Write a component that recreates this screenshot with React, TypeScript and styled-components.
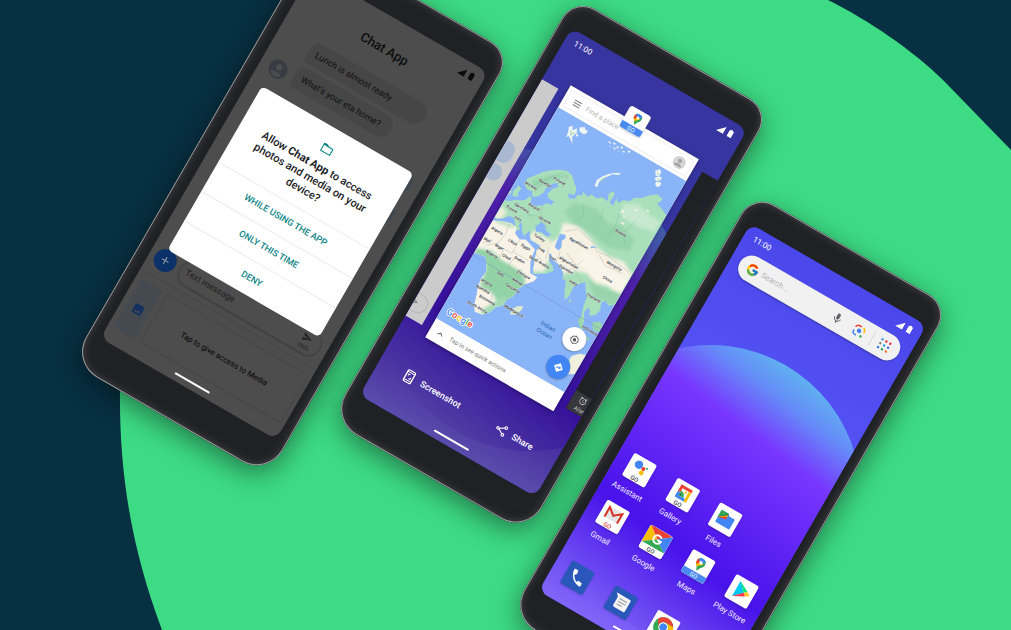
import React from "react";
import styled, { createGlobalStyle, css } from "styled-components";
import { FcGoogle } from "react-icons/fc";
import { MdMic, MdImage, MdAccountCircle, MdPhone, MdAlarm, MdAdd, MdSend } from "react-icons/md";

const GlobalStyle = createGlobalStyle`
  *, *::before, *::after { box-sizing: border-box; }
  body {
    margin: 0;
    background: #073042;
    font-family: Roboto, "Liberation Sans", sans-serif;
  }
  button, input { font-family: inherit; border: 0; margin: 0; padding: 0; background: none; }
  svg { display: block; flex: none; }
`;

/* ---------- stage ---------- */

const Stage = styled.main`
  position: relative;
  display: grid;
  place-items: center;
  min-height: 100vh;
  overflow: hidden;
  background: #073042;
`;

const Backdrop = styled.svg`
  position: absolute;
  inset: 0;
  width: 100%;
  height: 100%;
`;

const PhoneRow = styled.div`
  display: flex;
  align-items: flex-end;
  gap: 26px;
  height: 568px;
  transform: translate(25px, -15px) rotate(30deg);
`;

const Phone = styled.section<{ $raised?: boolean }>`
  position: relative;
  flex: none;
  width: 227px;
  height: 488px;
  padding: 28px 11px 36px 13px;
  align-self: ${(p) => (p.$raised ? "flex-start" : "flex-end")};
  border-radius: 24px 24px 30px 30px;
  background: #202124;
  box-shadow:
    inset 0 0 0 1px #9c9f9e,
    inset 0 0 8px 1px #45454c,
    3px 7px 28px rgba(0, 0, 0, 0.45);
`;

const Screen = styled.div<{ $bg: string }>`
  position: relative;
  display: flex;
  flex-direction: column;
  height: 100%;
  overflow: hidden;
  border-radius: 10px;
  background: ${(p) => p.$bg};
`;

const StatusBar = styled.header<{ $ink: string }>`
  position: relative;
  display: flex;
  align-items: center;
  flex: none;
  gap: 4px;
  height: 23px;
  padding: 0 10px;
  color: ${(p) => p.$ink};
  font-size: 8px;
  line-height: 10px;
  svg:first-of-type { margin-left: auto; }
`;

const NavPill = styled.div`
  position: absolute;
  left: 50%;
  bottom: 6px;
  width: 40px;
  height: 2px;
  margin-left: -20px;
  border-radius: 1px;
  background: #fff;
`;

function Status({ ink, time }: { ink: string; time?: string }) {
  return (
    <StatusBar $ink={ink}>
      {time && <time>{time}</time>}
      <svg width="8" height="8" viewBox="0 0 8 8" aria-hidden="true">
        <path d="M8 0V8H0Z" fill="currentColor" />
      </svg>
      <svg width="5" height="8" viewBox="0 0 5 8" aria-hidden="true">
        <path d="M1.4 0h2.2v.9H5V7.4a.6.6 0 0 1-.6.6H.6a.6.6 0 0 1-.6-.6V.9h1.4z" fill="currentColor" />
      </svg>
    </StatusBar>
  );
}

/* ---------- chat phone ---------- */

const ChatTitle = styled.h1`
  margin: 0;
  color: #0d0d0d;
  font-size: 13px;
  font-weight: 500;
  line-height: 18px;
  text-align: center;
`;

const Conversation = styled.div`
  display: flex;
  align-items: flex-end;
  gap: 6px;
  margin-top: 18px;
  padding-left: 8px;
  color: #383c42;
`;

const Bubbles = styled.div`
  display: flex;
  flex-direction: column;
  align-items: flex-start;
  gap: 4px;
  padding-bottom: 3px;
`;

const Bubble = styled.p<{ $wide?: boolean }>`
  width: ${(p) => (p.$wide ? "134px" : "auto")};
  margin: 0;
  padding: 0 13px 0 8px;
  border-radius: 8px 12px 12px 3px;
  background: #464646;
  color: #0f0f0f;
  font-size: 9px;
  line-height: 24px;
`;

const Sent = styled.div`
  width: 90px;
  height: 25px;
  margin: 11px 10px 0 auto;
  border-radius: 12px;
  background: #3f4850;
`;

const Composer = styled.div`
  display: flex;
  align-items: center;
  gap: 5px;
  margin-top: auto;
  padding: 0 7px 6px 6px;
`;

const AddButton = styled.button`
  display: grid;
  place-items: center;
  width: 23px;
  height: 23px;
  border-radius: 50%;
  background: #0c3068;
  color: #8c97a5;
`;

const MessageBox = styled.label`
  display: flex;
  align-items: center;
  flex: 1;
  height: 26px;
  padding: 0 9px 0 6px;
  border: 1px solid #414141;
  border-radius: 13px;
  box-shadow: 0 1px 1px #404040;
`;

const TextInput = styled.input<{ $size: number; $ink: string; $indent?: number }>`
  flex: 1;
  min-width: 0;
  height: 14px;
  padding-left: ${(p) => p.$indent ?? 0}px;
  color: ${(p) => p.$ink};
  font-size: ${(p) => p.$size}px;
  line-height: 14px;
  outline: 0;
  &::placeholder { color: ${(p) => p.$ink}; opacity: 1; }
`;

const SmsButton = styled.button`
  display: flex;
  flex-direction: column;
  align-items: center;
  color: #262626;
  font-size: 6px;
  line-height: 8px;
`;

const MediaPanel = styled.div`
  display: flex;
  gap: 6px;
  padding: 8px 4px 16px 6px;
  border-top: 1px solid #464646;
`;

const MediaTab = styled.button`
  display: grid;
  place-items: center;
  width: 24px;
  height: 56px;
  background: #444a50;
  color: #11305f;
`;

const MediaNotice = styled.p`
  display: grid;
  place-items: center;
  flex: 1;
  margin: 0;
  border: 1px solid #464646;
  border-radius: 2px;
  color: #050505;
  font-size: 8px;
`;

const Overlay = styled.div`
  position: absolute;
  inset: 0;
  display: grid;
  align-items: center;
  padding: 14px 14px 0;
`;

const Dialog = styled.div`
  border-radius: 5px;
  background: #fff;
`;

const DialogHead = styled.div`
  display: flex;
  flex-direction: column;
  align-items: center;
  gap: 7px;
  padding: 16px 12px 10px;
`;

const DialogTitle = styled.h2`
  margin: 0;
  color: #202124;
  font-size: 11px;
  font-weight: 500;
  line-height: 14px;
  text-align: center;
  b { font-weight: 700; }
`;

const DialogButton = styled.button`
  display: block;
  width: 100%;
  height: 34px;
  border-top: 1px solid #ececec;
  color: #0b8484;
  font-size: 9px;
  font-weight: 500;
  line-height: 12px;
`;

function ChatPhone() {
  return (
    <Phone aria-label="Permission request">
      <Screen $bg="#4d4d4d">
        <Status ink="#0a0a0a" />
        <ChatTitle>Chat App</ChatTitle>
        <Conversation>
          <MdAccountCircle size={23} />
          <Bubbles>
            <Bubble $wide>Lunch is almost ready</Bubble>
            <Bubble>What’s your eta home?</Bubble>
          </Bubbles>
        </Conversation>
        <Sent />
        <Sent />
        <Composer>
          <AddButton aria-label="Add attachment"><MdAdd size={13} /></AddButton>
          <MessageBox>
            <TextInput $size={9} $ink="#1f1f1f" placeholder="Text message" aria-label="Text message" />
            <SmsButton>
              <MdSend size={11} />
              SMS
            </SmsButton>
          </MessageBox>
        </Composer>
        <MediaPanel>
          <MediaTab aria-label="Media"><MdImage size={13} /></MediaTab>
          <MediaNotice>Tap to give access to Media</MediaNotice>
        </MediaPanel>
        <Overlay>
          <Dialog role="dialog" aria-labelledby="permission-title">
            <DialogHead>
              <svg width="12" height="12" viewBox="0 0 12 12" fill="none" stroke="#0b8484" aria-hidden="true">
                <path d="M.8 2.2h3.6l1.2 1.3h5.6v6.7H.8z" strokeWidth="1.1" strokeLinejoin="round" />
                <path d="M.8 2h3.8l1.3 1.6H.8z" fill="#0b8484" strokeWidth=".3" />
              </svg>
              <DialogTitle id="permission-title">
                Allow <b>Chat App</b> to access<br />photos and media on your<br />device?
              </DialogTitle>
            </DialogHead>
            <DialogButton>WHILE USING THE APP</DialogButton>
            <DialogButton>ONLY THIS TIME</DialogButton>
            <DialogButton>DENY</DialogButton>
          </Dialog>
        </Overlay>
        <NavPill />
      </Screen>
    </Phone>
  );
}

/* ---------- wallpaper ---------- */

const WallpaperSvg = styled.svg`
  position: absolute;
  inset: 0;
  width: 100%;
  height: 100%;
`;

function Wallpaper({ id, sky, disc }: { id: string; sky: string[]; disc: string[] }) {
  const stops = [0, 0.1, 0.25, 0.7, 1];
  return (
    <WallpaperSvg viewBox="0 0 203 424" preserveAspectRatio="xMidYMid slice" aria-hidden="true">
      <defs>
        <linearGradient id={`${id}-sky`} x1="0" y1="0" x2="0" y2="1">
          {sky.map((c, i) => <stop key={i} offset={[0, 0.4, 0.8, 1][i]} stopColor={c} />)}
        </linearGradient>
        <linearGradient id={`${id}-disc`} gradientUnits="userSpaceOnUse" x1="124" y1="107" x2="84" y2="408">
          {disc.map((c, i) => <stop key={i} offset={stops[i]} stopColor={c} />)}
        </linearGradient>
      </defs>
      <rect width="203" height="424" fill={`url(#${id}-sky)`} />
      <circle cx="101" cy="256" r="151" fill={`url(#${id}-disc)`} />
    </WallpaperSvg>
  );
}

/* ---------- shared drawings ---------- */

function MapsPin({ size }: { size: number }) {
  return (
    <svg width={size} height={size} viewBox="0 0 24 24" aria-hidden="true">
      <defs>
        <clipPath id={`pin-${size}`}>
          <path d="M12 1a7.6 7.6 0 0 0-7.6 7.6c0 2.2.8 3.8 2.2 5.5 2 2.4 3.4 3.9 4.2 7.2.3 1.1.6 1.7 1.2 1.7s.9-.6 1.2-1.7c.8-3.3 2.2-4.8 4.2-7.2 1.4-1.7 2.2-3.3 2.2-5.5A7.6 7.6 0 0 0 12 1z" />
        </clipPath>
      </defs>
      <g clipPath={`url(#pin-${size})`}>
        <rect width="24" height="24" fill="#34a853" />
        <path d="M12 9L7 16 0 10V3L9 0z" fill="#fbbc04" />
        <path d="M0 14l8 4 9-9-5-3z" fill="#fbbc04" />
        <path d="M0 3l6 1 5 4-5 6-6-4z" fill="#ea4335" />
        <path d="M8 0h8l4 4-8 6-7-6z" fill="#4285f4" />
      </g>
      <circle cx="12" cy="8.6" r="2.7" fill="#fff" />
    </svg>
  );
}

/* ---------- recents phone ---------- */

const Recents = styled.div`
  position: relative;
  display: flex;
  align-items: center;
  justify-content: space-between;
  height: 291px;
  margin-top: 27px;
`;

const PreviousCard = styled.div`
  display: flex;
  flex-direction: column;
  width: 19px;
  height: 273px;
  overflow: hidden;
  background: #cbcbcb;
`;

const PaleBubble = styled.div<{ $h: number; $top: number }>`
  flex: none;
  width: 26px;
  height: ${(p) => p.$h}px;
  margin: ${(p) => p.$top}px 0 0 -13px;
  border-radius: 9px;
  background: #a9b8cf;
`;

const PaleSend = styled.div`
  flex: none;
  display: grid;
  place-items: center end;
  width: 30px;
  height: 20px;
  margin: auto 0 7px -15px;
  padding-right: 9px;
  border: 1px solid #b5b5b5;
  border-radius: 10px;
  color: #7d7d7d;
`;

const NextCard = styled.div`
  display: flex;
  align-items: flex-end;
  width: 18px;
  height: 273px;
  overflow: hidden;
  background: #202124;
`;

const AlarmTab = styled.div`
  display: flex;
  flex-direction: column;
  gap: 1px;
  flex: none;
  width: 30px;
  height: 21px;
  padding: 2px 7px;
  background: #37383b;
  color: #c3c4c6;
  font-size: 6px;
  line-height: 7px;
`;

const MapCard = styled.article`
  position: relative;
  display: flex;
  flex-direction: column;
  width: 148px;
  height: 291px;
  background: #fff;
  box-shadow: 0 1px 4px rgba(0, 0, 0, 0.35);
`;

const MapSearch = styled.label`
  display: flex;
  align-items: center;
  flex: none;
  height: 19px;
  margin: 3px;
  padding: 0 5px 0 7px;
  border: 1px solid #f0f0f0;
  border-radius: 2px;
  color: #c4c4c4;
`;

const MapsBadge = styled.div`
  position: absolute;
  top: -13px;
  left: 50%;
  width: 24px;
  height: 24px;
  margin-left: -12px;
  border-radius: 3px;
  overflow: hidden;
  background: #fff;
  box-shadow: 0 1px 2px rgba(0, 0, 0, 0.25);
`;

const GoStrip = styled.span<{ $tone: "plain" | "blue" | "red" }>`
  position: absolute;
  inset: auto 0 0;
  color: #444;
  font-size: 6px;
  font-weight: 500;
  line-height: 7px;
  text-align: center;
  ${(p) => p.$tone === "blue" && css`background: #4a8af0; color: #d7e6ff;`}
  ${(p) => p.$tone === "red" && css`color: #e0453a;`}
`;

const BadgePin = styled.div`
  display: grid;
  justify-items: center;
  padding-top: 3px;
`;

const MapArea = styled.div`
  position: relative;
  flex: 1;
  min-height: 0;
  > svg { width: 100%; height: 100%; }
`;

const MapButtons = styled.div`
  position: absolute;
  right: 6px;
  bottom: 7px;
  display: flex;
  flex-direction: column;
  gap: 8px;
`;

const MapButton = styled.button<{ $blue?: boolean }>`
  display: grid;
  place-items: center;
  width: 24px;
  height: 24px;
  border-radius: 50%;
  background: ${(p) => (p.$blue ? "#4285f4" : "#fff")};
  box-shadow: 0 1px 2px rgba(0, 0, 0, 0.3);
`;

const QuickBar = styled.button`
  display: flex;
  align-items: center;
  flex: none;
  gap: 7px;
  height: 22px;
  padding-left: 8px;
  color: #777;
  font-size: 6px;
  line-height: 8px;
`;

const Actions = styled.div`
  position: relative;
  display: flex;
  justify-content: space-between;
  margin-top: 34px;
  padding: 0 27px 0 28px;
`;

const Action = styled.button`
  display: flex;
  align-items: center;
  gap: 7px;
  height: 16px;
  color: #fff;
  font-size: 9px;
  font-weight: 500;
`;

const LABELS: [string, number, number][] = [
  ["Algeria", 9, 138], ["Mali", 5, 151], ["Libya", 28, 140], ["Niger", 19, 151], ["Egypt", 42, 138],
  ["Nigeria", 16, 161], ["Chad", 30, 156], ["Sudan", 43, 152], ["Saudi Arabia", 61, 144], ["Iran", 71, 134],
  ["Iraq", 57, 132], ["Turkey", 49, 123], ["Afghanistan", 87, 130], ["Pakistan", 88, 137], ["India", 101, 145],
  ["Kazakhstan", 86, 108], ["DRC", 34, 174], ["Ethiopia", 54, 163], ["Kenya", 52, 172], ["Tanzania", 51, 180],
  ["Angola", 26, 188], ["Namibia", 26, 196], ["Botswana", 35, 203], ["South Africa", 30, 214],
  ["Madagascar", 64, 199], ["Thailand", 126, 148], ["Indonesia", 139, 178], ["Mongolia", 128, 110],
  ["China", 129, 125], ["Russia", 117, 78], ["Ukraine", 45, 105], ["Poland", 29, 99], ["Germany", 19, 106],
  ["France", 11, 112], ["Italy", 21, 117], ["Norway", 16, 82], ["Sweden", 27, 73], ["Finland", 38, 64],
];

const EURASIA =
  "M0 108L6 105 9 102 14 100 18 97 20 91 23 93 24 98 30 97 36 93 38 89 43 88 44 84 38 84 34 81 36 74 40 69 37 66 33 70 30 76 30 82 27 88 22 91 20 86 14 87 9 83 9 77 14 71 19 64 25 59 32 54 39 51 46 52 50 56 57 62 58 68 52 70 55 74 60 71 61 66 65 65 64 61 70 63 73 59 79 60 83 56 90 57 87 50 90 45 93 48 92 57 97 58 96 50 100 53 103 48 109 46 111 41 118 37 124 30 130 26 137 28 134 34 142 37 148 40V143L143 147 138 144 135 148 138 155 136 162 131 165 129 160 126 159 125 165 129 171 131 180 127 175 123 165 121 158 120 150 116 146 111 138 107 142 103 148 104 158 102 164 98 157 93 146 90 147 87 141 80 136 72 135 68 131 65 131 69 138 74 140 78 144 73 150 62 157 59 152 55 141 53 135 54 129 48 129 43 129 39 125 38 121 36 124 35 129 31 126 28 121 25 118 25 122 28 125 25 129 22 124 17 118 12 119 8 124 3 127 0 128Z";
const AFRICA =
  "M0 131L8 127 18 124 24 125 26 131 33 134 38 131 45 133 51 135 53 147 56 153 59 158 67 158 66 163 60 170 56 178 56 186 52 192 51 200 46 204 44 211 38 218 30 219 26 213 23 203 20 195 19 186 20 178 15 170 12 166 0 168Z";

function WorldMap() {
  return (
    <svg viewBox="0 0 148 244" preserveAspectRatio="xMidYMid slice" role="img" aria-label="World map">
      <defs>
        <clipPath id="eurasia"><path d={EURASIA} /></clipPath>
        <clipPath id="africa"><path d={AFRICA} /></clipPath>
        <filter id="soft" x="-20%" y="-20%" width="140%" height="140%"><feGaussianBlur stdDeviation="1.6" /></filter>
      </defs>
      <rect width="148" height="244" fill="#8ab4f8" />
      <g fill="#eef5f3">
        <path d="M19 12L22 9 24 13 27 9 29 13 27 19 31 25 27 22 24 20 22 22 21 16zM29 7l4-3 2 2 3 0-1 4-3 1-4-1zM29 13l3 2-2 2z" />
        <path d="M60 5l3-1 1 2zM65 3l4 0-2 2zM69 6l3-2 1 2zM74 2l3 1-2 2zM77 6l3-1 0 2zM67 8l3-1 1 2zM82 3l3-1-1 3zM73 8l2 0 0 1zM63 8l2 0 0 1z" />
        <path d="M71 50l-1-6 3-6 4-5 6-5 5-2-2 3-5 2-4 5-3 5-1 5 1 4z" />
        <path d="M116 7l3-4 3 2 0 4-3 2zM121 10l4-1 0 4-3 2-3-1zM122 16l5-2 1 3-2 3-3-1z" />
      </g>
      <path d="M23 14l2 4 2-4M119 7l1 2M123 12l1 3M73 44l3-7" fill="none" stroke="#a8dab5" strokeWidth="1.2" />
      <path d={EURASIA} fill="#a9dfbb" />
      <g clipPath="url(#eurasia)">
        <g filter="url(#soft)">
          <path d="M62 98L76 93 92 97 104 102 118 104 134 101 148 108V133L132 130 120 134 108 130 98 133 88 142 68 134 70 150 54 158 50 128 60 124 66 112Z" fill="#f6f1e2" />
          <path d="M40 119l20 0 4 8-24 4zM0 114l8 3-2 10-8 2z" fill="#efeeda" />
          <path d="M62 74l22-5 18 7 12-5 18 6 2 12-22 8-20-4-20 1-14-6z" fill="#97d4ac" />
          <path d="M14 76l11-10 12-12 7 0-13 15-12 15z" fill="#9ad6b0" />
          <path d="M104 52l14-8 16 4 12 0v12l-16 4-18 0z" fill="#c6e8ce" />
          <path d="M96 108l10 4 16-1 14 5 12-2v14l-24 4-20-6-14 0z" fill="#faf5ea" />
          <path d="M112 134l16 0 20-4v14l-22 2z" fill="#98d4ac" />
          <path d="M94 143l8-2 3 8-1 8-5-2z" fill="#a9dcb8" />
        </g>
        <g fill="none" stroke="#7fc79a" strokeWidth=".7" opacity=".7">
          <path d="M70 72l6 8-3 9M90 66l3 10-4 12M106 62l3 12-2 14M124 60l-4 16 6 10M20 104l9 4 7-3 9 4M12 88l10-14 12-16" />
        </g>
        <g fill="#e6efdd">
          <path d="M106 57l3-1 1 3-3 2zM110 61l3-1 0 2-2 1zM117 50l4-1 0 2-3 1zM128 44l4 1-3 2zM112 68l3-1 1 2-3 1zM126 57l3 0-1 2zM119 56l3 1-2 1z" />
        </g>
      </g>
      <path d={AFRICA} fill="#f8f3e6" />
      <g clipPath="url(#africa)">
        <g filter="url(#soft)">
          <path d="M0 163l14-5 14 3 14 0 12 1 6 8-4 22-10 8-10-6-14 0-4-20L0 170z" fill="#92d3a6" />
          <path d="M46 194l12-4-8 20-10 8-6-2z" fill="#a5dab4" />
          <path d="M2 128l20-4 0 3-18 4z" fill="#b4dfba" />
        </g>
      </g>
      <path d="M43 108l5 1 3 4 7 1-3 4-6-1-6 2-3-4zM65 109l5-2 2 3-2 4 3 6-1 4-5-1-1-6zM78 107l3 0 0 3-3 0zM98 104l6-2-5 4z" fill="#8ab4f8" />
      <path d="M62 204l-1-6 3-5 5-3 1 4-3 7z" fill="#dcebcf" />
      <path d="M106 160l2 1 0 3-2-1z" fill="#a9dcb8" />
      <path d="M3 95l2-7 4 1-1 5 2 4-5 2zM0 96l2 0 0 4-2 0z" fill="#a9dfbb" />
      <path d="M124 170l5 5 4 8-3-1-6-7zM137 170l6-5 5 2v7l-6 2zM133 184l10 1v2l-9-1zM140 134l3 3-2 1z" fill="#98d4ac" />
      <path d="M148 201l-6 2-6 6 0 9 2 8 5 0 5-3z" fill="#f1efdd" />
      <path d="M136 211l-1 8 3 7 3-1-3-8z" fill="#a5dab4" />
      <g fill="none" stroke="#a9a9a0" strokeWidth=".35">
        <path d="M16 126l2 10-2 12-10 8M33 134l0 16-10 0M33 148l18 0M10 148l-8 8M24 152l0 12M38 150l-2 12 8 4M50 158l-4 8 8 6M38 182l-12 0M22 194l14 0 4 10M62 126l3 12M54 138l10 4M74 124l2 12M80 122l14 6-4 12M98 120l-4 12 14 8M68 104l10-8 20 4 8 6M106 106l12-2 26 4M110 108l10 6 18-2" />
        <path d="M24 98l2 10 10 2M36 94l4 12 12 4M14 102l2 10M28 62l-6 24M42 54l2 14" />
      </g>
      <path d="M0 171H148" stroke="#6f8fb8" strokeWidth=".6" strokeDasharray="2 1" />
      <g fill="#2b2d30" fontFamily="Roboto, sans-serif" fontSize="4" fontWeight="500" textAnchor="middle" stroke="#fff" strokeWidth=".3" paintOrder="stroke">
        {LABELS.map(([name, x, y]) => <text key={name} x={x} y={y + 1}>{name}</text>)}
      </g>
      <g fill="#2566b5" fontFamily="Roboto, sans-serif" fontSize="6" textAnchor="middle">
        <text x="101" y="197">Indian</text>
        <text x="101" y="205">Ocean</text>
      </g>
      <text x="6" y="235" fontFamily="Roboto, sans-serif" fontSize="9" fontWeight="500" stroke="#fff" strokeWidth="1.6" paintOrder="stroke">
        <tspan fill="#4285f4">G</tspan><tspan fill="#ea4335">o</tspan><tspan fill="#fbbc04">o</tspan>
        <tspan fill="#4285f4">g</tspan><tspan fill="#34a853">l</tspan><tspan fill="#ea4335">e</tspan>
      </text>
    </svg>
  );
}

function RecentsPhone() {
  return (
    <Phone $raised aria-label="Recent apps">
      <Screen $bg="#36349c">
        <Wallpaper
          id="recents"
          sky={["#37359f", "#3535a0", "#3c1e9a", "#5a4cab"]}
          disc={["#41699f", "#4252a8", "#4d20a8", "#35109a", "#4f3ea4"]}
        />
        <Status ink="#fff" time="11:00" />
        <Recents>
          <PreviousCard>
            <PaleBubble $h={23} $top={70} />
            <PaleBubble $h={17} $top={3} />
            <PaleSend><MdSend size={6} /></PaleSend>
          </PreviousCard>
          <MapCard>
            <MapSearch>
              <svg width="8" height="8" viewBox="0 0 8 8" stroke="#666" strokeWidth=".9" aria-hidden="true">
                <path d="M0 1.5H8M0 4H8M0 6.5H8" />
              </svg>
              <TextInput $size={7} $ink="#b5b5b5" $indent={6} placeholder="Find a place" aria-label="Find a place" />
              <svg width="13" height="13" viewBox="0 0 13 13" aria-hidden="true">
                <circle cx="6.5" cy="6.5" r="6.5" fill="#d4d4d4" />
                <circle cx="6.5" cy="4.8" r="2" fill="#a3a3a3" />
                <path d="M2.6 10.6c0-2 2.4-2.8 3.9-2.8s3.9.8 3.9 2.8z" fill="#a3a3a3" />
              </svg>
            </MapSearch>
            <MapArea>
              <WorldMap />
              <MapButtons>
                <MapButton aria-label="My location">
                  <svg width="11" height="11" viewBox="0 0 11 11" fill="none" stroke="#666" aria-hidden="true">
                    <circle cx="5.5" cy="5.5" r="3.6" strokeWidth=".9" />
                    <circle cx="5.5" cy="5.5" r="1.7" fill="#555" stroke="none" />
                    <path d="M5.5 .8v1.4M5.5 8.8v1.4M.8 5.5h1.4M8.8 5.5h1.4" strokeWidth=".9" />
                  </svg>
                </MapButton>
                <MapButton $blue aria-label="Directions">
                  <svg width="11" height="11" viewBox="0 0 11 11" aria-hidden="true">
                    <path d="M5.5 1L10 5.5 5.5 10 1 5.5z" fill="#fff" stroke="#fff" strokeLinejoin="round" strokeWidth=".6" />
                    <path d="M4 7V5.2h3M6 3.8l1.4 1.4L6 6.6" fill="none" stroke="#4285f4" strokeWidth=".9" />
                  </svg>
                </MapButton>
              </MapButtons>
            </MapArea>
            <QuickBar>
              <svg width="7" height="5" viewBox="0 0 7 5" fill="none" stroke="#666" aria-hidden="true">
                <path d="M1 4l2.5-2.5L6 4" />
              </svg>
              Tap to see quick actions
            </QuickBar>
            <MapsBadge>
              <BadgePin><MapsPin size={13} /></BadgePin>
              <GoStrip $tone="blue">GO</GoStrip>
            </MapsBadge>
          </MapCard>
          <NextCard>
            <AlarmTab>
              <MdAlarm size={9} />
              Alarm
            </AlarmTab>
          </NextCard>
        </Recents>
        <Actions>
          <Action>
            <svg width="12" height="14" viewBox="0 0 12 14" fill="none" stroke="#fff" aria-hidden="true">
              <rect x="2" y=".8" width="8" height="12.4" rx="1.2" strokeWidth="1.3" />
              <path d="M2 2.8h8M2 11.2h8" strokeWidth="1" />
              <path d="M4.2 6.6V4.8H6M7.8 7.4v1.8H6" strokeWidth="1" />
            </svg>
            Screenshot
          </Action>
          <Action>
            <svg width="12" height="12" viewBox="0 0 12 12" fill="none" stroke="#fff" strokeWidth="1.1" aria-hidden="true">
              <path d="M3 6l6-3.6M3 6l6 3.6" />
              <circle cx="2.2" cy="6" r="1.2" fill="#35129a" />
              <circle cx="9.6" cy="2.1" r="1.3" fill="#35129a" />
              <circle cx="9.6" cy="9.9" r="1.3" fill="#35129a" />
            </svg>
            Share
          </Action>
        </Actions>
        <NavPill />
      </Screen>
    </Phone>
  );
}

/* ---------- home phone ---------- */

const SearchBar = styled.label`
  position: relative;
  display: flex;
  align-items: center;
  flex: none;
  height: 27px;
  margin: 2px 10px 0;
  padding: 0 10px 0 8px;
  border-radius: 14px;
  background: #f1f1f1;
  box-shadow: 0 1px 2px rgba(0, 0, 0, 0.3);
  color: #5f6368;
`;

const SearchTools = styled.span`
  display: flex;
  align-items: center;
  gap: 12px;
`;

const Rule = styled.span`
  width: 1px;
  height: 15px;
  margin: 0 -5px 0 -4px;
  background: #d9d9d9;
`;

const AppGrid = styled.div<{ $push?: boolean }>`
  position: relative;
  display: grid;
  grid-template-columns: repeat(4, 1fr);
  row-gap: 11px;
  margin: ${(p) => (p.$push ? "auto 2px 0" : "27px 2px 18px")};
`;

const AppLink = styled.a<{ $first?: boolean }>`
  display: flex;
  flex-direction: column;
  align-items: center;
  gap: 7px;
  grid-column: ${(p) => (p.$first ? 1 : "auto")};
  color: #f1edff;
  font-size: 8px;
  line-height: 10px;
  text-decoration: none;
  white-space: nowrap;
`;

const Tile = styled.span<{ $bg?: string }>`
  position: relative;
  display: block;
  width: 26px;
  height: 26px;
  overflow: hidden;
  border-radius: 2px;
  background: ${(p) => p.$bg ?? "#fff"};
  color: #fff;
  box-shadow: 0 1px 2px rgba(0, 0, 0, 0.2);
`;

const Centered = styled.span<{ $top?: number }>`
  display: grid;
  justify-items: center;
  padding-top: ${(p) => p.$top ?? 0}px;
`;

const Art = ({ children }: { children: React.ReactNode }) => (
  <svg width="26" height="26" viewBox="0 0 26 26" aria-hidden="true">{children}</svg>
);

const AssistantIcon = () => (
  <Tile>
    <Art>
      <circle cx="9.8" cy="8.4" r="4.2" fill="#4285f4" />
      <circle cx="15.8" cy="10" r="2" fill="#ea4335" />
      <circle cx="15.8" cy="14.4" r="2.4" fill="#fbbc04" />
      <circle cx="18.8" cy="8" r="1" fill="#34a853" />
    </Art>
    <GoStrip $tone="plain">GO</GoStrip>
  </Tile>
);

const GalleryIcon = () => (
  <Tile>
    <Art>
      <path d="M6.5 4h13v3H9.4v4.4H6.5z" fill="#ea4335" />
      <path d="M16.6 7h2.9v11h-2.9z" fill="#fbbc04" />
      <path d="M6.5 11.4h2.9V15h7.2v3H6.5z" fill="#4285f4" />
      <path d="M9.4 9.6c3 .4 5 2.4 5.6 5.4h-2.8c0-1.6-1-2.8-2.8-3.2z" fill="#34a853" />
      <path d="M9.4 11.8c1.8.4 2.8 1.6 2.8 3.2H9.4z" fill="#188038" />
      <circle cx="14.2" cy="9.2" r="1.2" fill="#fbbc04" />
    </Art>
    <GoStrip $tone="plain">GO</GoStrip>
  </Tile>
);

const FilesIcon = () => (
  <Tile>
    <Art>
      <path d="M5 6h8l1.6 2H20.4a1 1 0 0 1 1 1V18.6a1 1 0 0 1-1 1H6a1 1 0 0 1-1-1z" fill="#4285f4" />
      <path d="M5 6h8L5 13.6z" fill="#34a853" />
      <path d="M5 13.6L13 6l.6 2.4L5 14.4z" fill="#188038" />
      <path d="M5 13.8L13.4 7.6V10z" fill="#fbbc04" />
      <path d="M5 14L13.4 9.4v3z" fill="#ea4335" />
    </Art>
  </Tile>
);

const GmailIcon = () => (
  <Tile>
    <Art>
      <rect x="5" y="4.6" width="16" height="11.8" fill="#e3e3e3" />
      <path d="M5 4.6l8 7 8-7v1l-8 8-8-8z" fill="#c9c9c9" />
      <path d="M5.8 16.4V5.6l7.2 5.8 7.2-5.8v10.8" fill="none" stroke="#d93025" strokeWidth="2" />
    </Art>
    <GoStrip $tone="red">GO</GoStrip>
  </Tile>
);

const GoogleIcon = () => (
  <Tile>
    <Art>
      <path d="M0 0h26L13 10z" fill="#ea4335" />
      <path d="M26 0v19.4L13 10z" fill="#4285f4" />
      <path d="M0 0v19.4L13 10z" fill="#fbbc04" />
      <path d="M0 19.4h26L13 10z" fill="#34a853" />
      <path d="M16.4 7.2a4.2 4.2 0 1 0 1 3.3H13.2" fill="none" stroke="#fff" strokeWidth="1.9" />
      <rect y="19" width="26" height="7" fill="#fff" />
    </Art>
    <GoStrip $tone="plain">GO</GoStrip>
  </Tile>
);

const MapsIcon = () => (
  <Tile>
    <Centered $top={3}><MapsPin size={15} /></Centered>
    <GoStrip $tone="blue">GO</GoStrip>
  </Tile>
);

const PlayIcon = () => (
  <Tile>
    <Art>
      <path d="M7 4.4v17.2L15.6 13z" fill="#00c8f5" />
      <path d="M7 4.4L18.4 10.4 15.6 13z" fill="#00e676" />
      <path d="M18.4 10.4l4.2 2.6-4.2 2.6-2.8-2.6z" fill="#ffca28" />
      <path d="M7 21.6l8.6-8.6 2.8 2.6z" fill="#f4364c" />
    </Art>
  </Tile>
);

const MessagesIcon = () => (
  <Tile $bg="#2a57ba">
    <Art>
      <path d="M4.5 6H19.6a1.4 1.4 0 0 1 1.4 1.4V18.6a1.4 1.4 0 0 1-1.4 1.4H9a1.4 1.4 0 0 1-1.4-1.4V9.4z" fill="#f4f4f4" />
      <path d="M10 10h8.4M10 13h8.4M10 16h5.6" stroke="#9a9a9a" strokeWidth="1.1" />
    </Art>
  </Tile>
);

const ChromeIcon = () => (
  <Tile>
    <Art>
      <circle cx="13" cy="13" r="10" fill="#34a853" />
      <path d="M4.34 8a10 10 0 0 1 17.32 0H13a5 5 0 0 0-4.33 7.5z" fill="#ea4335" />
      <path d="M21.66 8A10 10 0 0 1 13 23l4.33-7.5A5 5 0 0 0 13 8z" fill="#fbbc04" />
      <circle cx="13" cy="13" r="4.9" fill="#fff" />
      <circle cx="13" cy="13" r="3.8" fill="#4285f4" />
    </Art>
  </Tile>
);

const APPS: { name: string; Icon: () => React.JSX.Element; first?: boolean }[] = [
  { name: "Assistant", Icon: AssistantIcon },
  { name: "Gallery", Icon: GalleryIcon },
  { name: "Files", Icon: FilesIcon },
  { name: "Gmail", Icon: GmailIcon, first: true },
  { name: "Google", Icon: GoogleIcon },
  { name: "Maps", Icon: MapsIcon },
  { name: "Play Store", Icon: PlayIcon },
];

const DOTS = ["#4285f4", "#ea1d2c", "#ea1d2c", "#7a7a7a", "#00a3e0", "#4a5be0", "#1a73e8", "#1e9e50", "#f26a1b"];

function HomePhone() {
  return (
    <Phone aria-label="Home screen">
      <Screen $bg="#4c4af0">
        <Wallpaper
          id="home"
          sky={["#4a48ea", "#5553f6", "#5a34f0", "#8166f8"]}
          disc={["#60b0f0", "#658cf8", "#7836ff", "#4812ea", "#7658f4"]}
        />
        <Status ink="#fff" time="11:00" />
        <SearchBar>
          <FcGoogle size={14} />
          <TextInput $size={8} $ink="#b3b3b3" $indent={3} placeholder="Search..." aria-label="Search" />
          <SearchTools>
            <MdMic size={13} />
            <svg width="13" height="13" viewBox="0 0 13 13" fill="none" strokeWidth="1.5" aria-hidden="true">
              <path d="M1.4 4.6A3.4 3.4 0 0 1 4.6 1.6H7" stroke="#ea4335" />
              <path d="M9 1.8a3.2 3.2 0 0 1 2.6 3.2V6" stroke="#fbbc04" />
              <path d="M1.4 7.6v.8A3.2 3.2 0 0 0 4.6 11.6H5.8" stroke="#4285f4" />
              <circle cx="6.5" cy="6.5" r="2.2" fill="#4285f4" />
              <circle cx="10.4" cy="10.6" r="1.3" fill="#34a853" />
            </svg>
            <Rule />
            <svg width="13" height="13" viewBox="0 0 13 13" aria-hidden="true">
              {DOTS.map((fill, i) => (
                <circle key={i} cx={2 + (i % 3) * 4.5} cy={2 + Math.floor(i / 3) * 4.5} r="1.2" fill={fill} />
              ))}
            </svg>
          </SearchTools>
        </SearchBar>
        <AppGrid $push>
          {APPS.map(({ name, Icon, first }) => (
            <AppLink key={name} href="#" $first={first}>
              <Icon />
              {name}
            </AppLink>
          ))}
        </AppGrid>
        <AppGrid>
          <AppLink href="#" aria-label="Phone">
            <Tile $bg="#2a57ba"><Centered $top={4}><MdPhone size={18} /></Centered></Tile>
          </AppLink>
          <AppLink href="#" aria-label="Messages"><MessagesIcon /></AppLink>
          <AppLink href="#" aria-label="Chrome"><ChromeIcon /></AppLink>
        </AppGrid>
        <NavPill />
      </Screen>
    </Phone>
  );
}

export default function App() {
  return (
    <>
      <GlobalStyle />
      <Stage>
        <Backdrop viewBox="0 0 1011 630" preserveAspectRatio="xMidYMid slice" aria-hidden="true">
          <path
            d="M162 630C132 550 119 475 120 390C128 300 240 80 380 -30H760L828 0C870 21 912 50 943 80L1011 150V630Z"
            fill="#3ddc84"
          />
        </Backdrop>
        <PhoneRow>
          <ChatPhone />
          <RecentsPhone />
          <HomePhone />
        </PhoneRow>
      </Stage>
    </>
  );
}
